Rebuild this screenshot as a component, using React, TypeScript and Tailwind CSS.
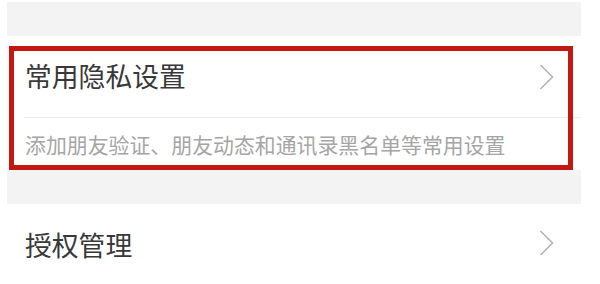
import React from "react";

function Chevron() {
  return (
    <svg width="15" height="26" viewBox="0 0 15 26" fill="none">
      <polyline points="1.5,1 13.5,13 1.5,25" stroke="#b4b4b4" strokeWidth="1.6" />
    </svg>
  );
}

export default function App() {
  return (
    <div
      className="relative w-[600px] h-[284px] bg-white overflow-hidden"
      style={{ fontFamily: '"Noto Sans CJK SC", "Noto Sans", sans-serif' }}
    >
      <div className="ml-[7px] w-[574px]">
        {/* top section gap */}
        <div className="h-[36px] pt-[2px]">
          <div className="h-full bg-[#f3f3f4]" />
        </div>

        {/* 常用隐私设置 */}
        <div className="h-[81px] flex items-center justify-between pl-[18px] pr-[27px]">
          <span className="text-[26.8px] leading-none text-[#383838]">常用隐私设置</span>
          <Chevron />
        </div>
        <div className="ml-[17px] h-px bg-[#ededed]" />
        <div className="h-[52px] flex items-center pl-[18px]">
          <span className="text-[20.9px] leading-none text-[#a5a5a5]">
            添加朋友验证、朋友动态和通讯录黑名单等常用设置
          </span>
        </div>

        {/* section gap */}
        <div className="h-[34px] bg-[#f3f3f4]" />

        {/* 授权管理 */}
        <div className="h-[80px] flex items-center justify-between pl-[18px] pr-[27px] pb-[2px]">
          <span className="text-[26.8px] leading-none text-[#383838] pt-[4px]">授权管理</span>
          <Chevron />
        </div>
      </div>

      {/* annotation box */}
      <div className="absolute left-[9px] top-[46px] w-[564px] h-[124px] border-[5px] border-[#c3170f]" />
    </div>
  );
}
